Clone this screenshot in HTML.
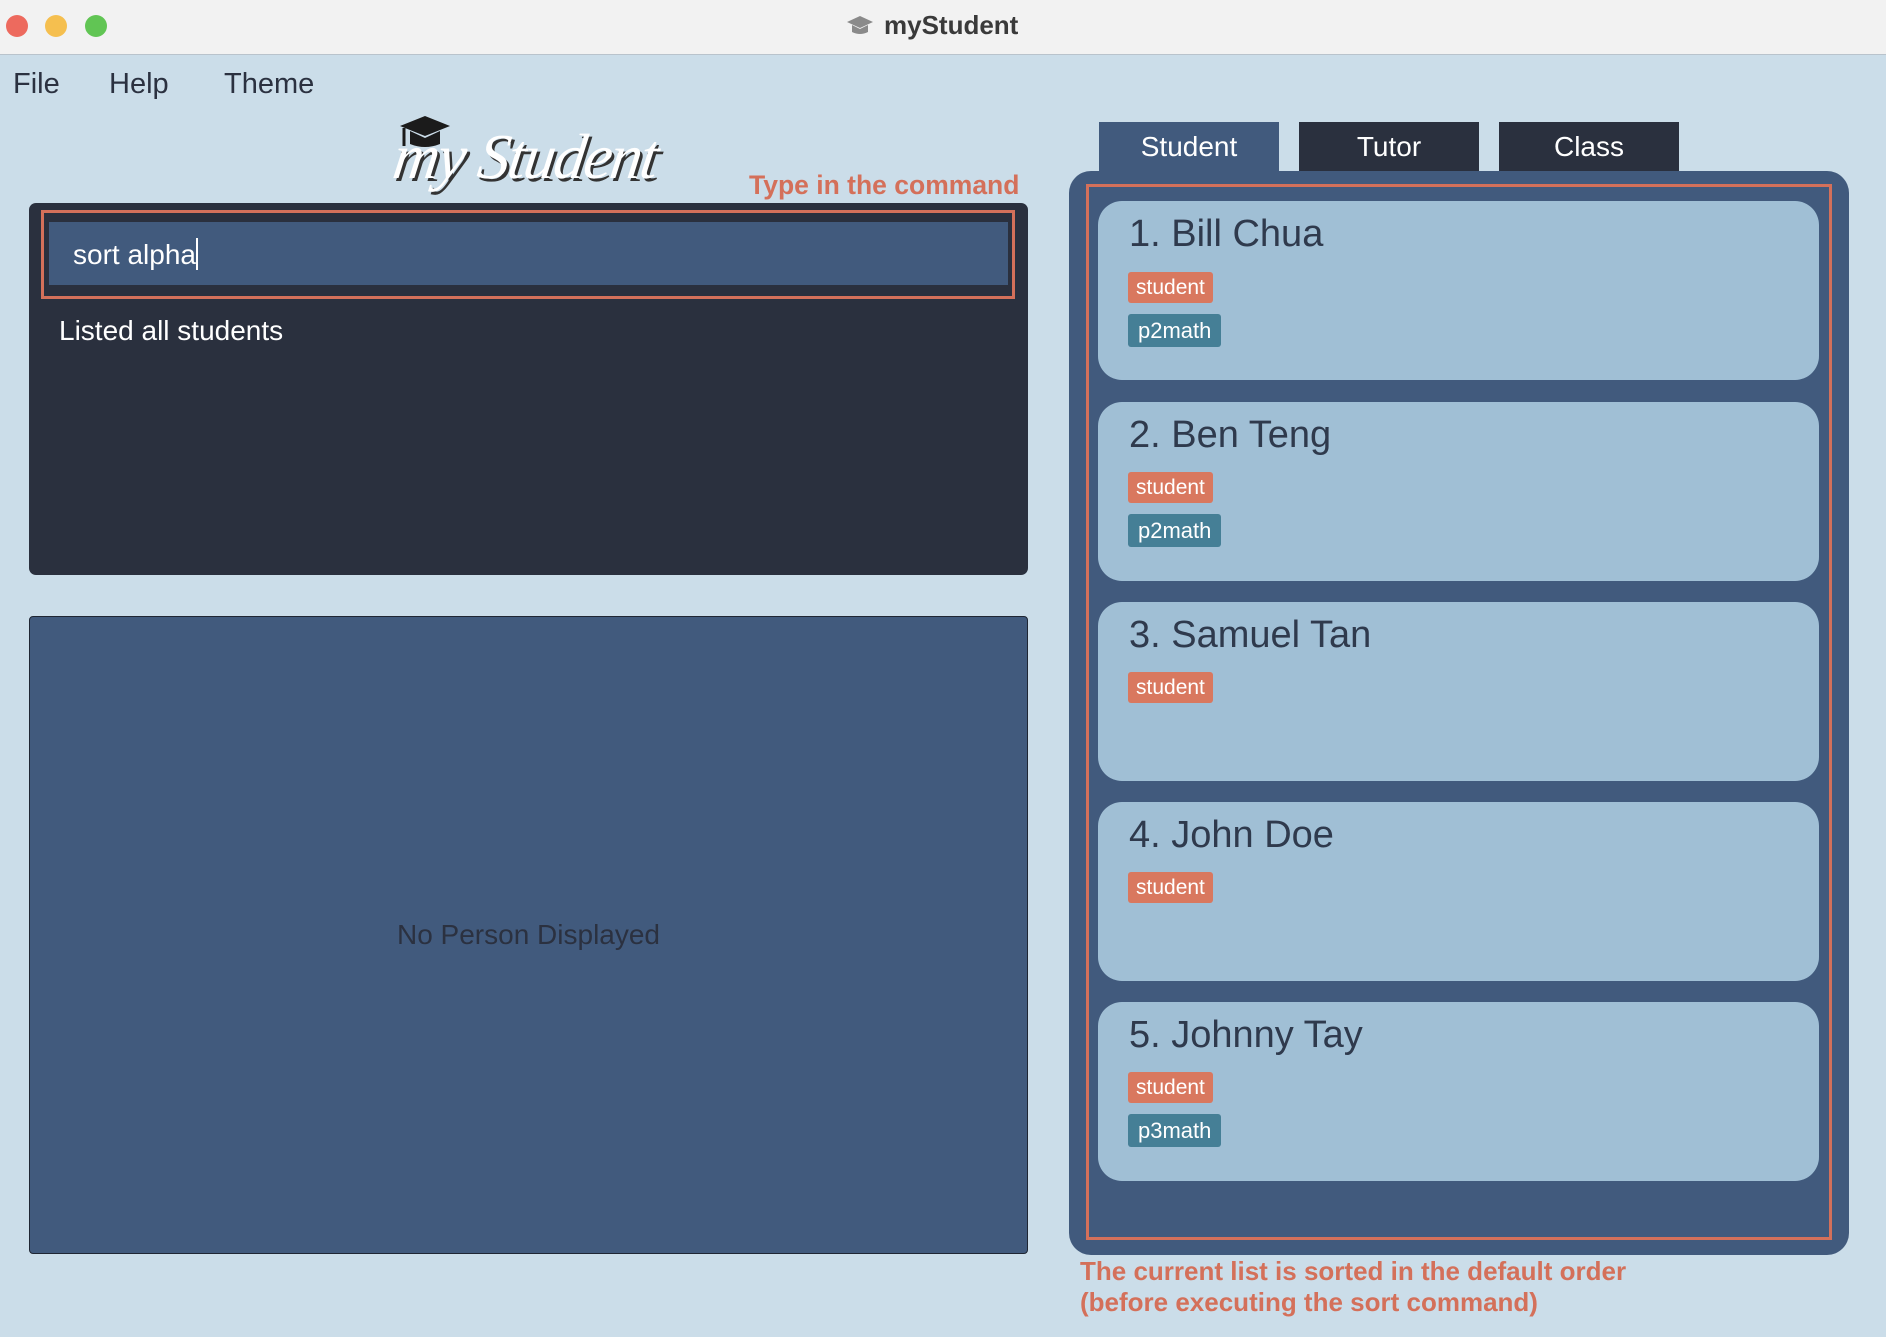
<!DOCTYPE html>
<html><head><meta charset="utf-8"><style>
*{margin:0;padding:0;box-sizing:border-box}
body{width:1886px;height:1337px;background:#cbdde9;font-family:"Liberation Sans",sans-serif;position:relative;overflow:hidden}
.abs{position:absolute}
.title{left:0;top:0;width:1886px;height:55px;background:#f2f2f2;border-bottom:1px solid #b9c3cc}
.dot{width:22px;height:22px;border-radius:50%;top:15px}
.menu{top:68px;font-size:29px;color:#2b3140}
.orange{color:#d4705a;font-weight:bold}
.card{left:1098px;width:721px;height:179px;background:#a0bfd5;border-radius:24px}
.card .n{position:absolute;left:31px;top:12px;font-size:38px;color:#2f3a4d}
.tag{position:absolute;left:30px;height:31px;border-radius:3px;color:#fff;font-size:21px;line-height:31px;padding:0 8px}
.st{background:#d9785f}
.tl{background:#457f96;height:33px;line-height:33px;font-size:22px;padding:0 10px}
.tab{top:122px;height:49px;color:#fff;font-size:28px;text-align:center;line-height:50px}
</style></head><body>
<div class="abs title"></div>
<div class="abs dot" style="left:6px;background:#ed6a5e"></div>
<div class="abs dot" style="left:45px;background:#f5bf4f"></div>
<div class="abs dot" style="left:85px;background:#61c554"></div>
<svg class="abs" style="left:846px;top:14px" width="28" height="22" viewBox="0 0 28 22"><path d="M14 2 L27 8 L14 14 L1 8Z" fill="#8a8a8a"/><path d="M6 11 V18 Q14 22 22 18 V11 L14 15Z" fill="#8a8a8a"/></svg>
<div class="abs" style="left:884px;top:10px;font-size:26px;font-weight:bold;color:#3a3a3a">myStudent</div>
<div class="abs menu" style="left:13px">File</div>
<div class="abs menu" style="left:109px">Help</div>
<div class="abs menu" style="left:224px">Theme</div>
<svg class="abs" style="left:398px;top:114px" width="54" height="40" viewBox="0 0 54 40"><path d="M27 2 L52 12 L27 22 L2 12Z" fill="#1b1b1b"/><path d="M12 17 V30 Q27 36 42 30 V17 L27 24Z" fill="#1b1b1b"/><path d="M6 14 V32" stroke="#1b1b1b" stroke-width="3"/></svg>
<div class="abs" style="left:394px;top:120px;font-family:'Liberation Serif',serif;font-style:italic;font-size:64px;color:#fff;text-shadow:3px 3px 0 #333;letter-spacing:-2px;transform:skewX(-8deg)">my Student</div>
<div class="abs orange" style="left:749px;top:170px;font-size:26.5px">Type in the command</div>
<div class="abs" style="left:29px;top:203px;width:999px;height:372px;background:#2a303e;border-radius:7px"></div>
<div class="abs" style="left:41px;top:210px;width:974px;height:89px;border:3px solid #d4705a"></div>
<div class="abs" style="left:49px;top:222px;width:959px;height:63px;background:#415a7d"></div>
<div class="abs" style="left:73px;top:238px;font-size:28px;color:#fff">sort alpha<span style="display:inline-block;width:2px;height:32px;background:#fff;vertical-align:-6px"></span></div>
<div class="abs" style="left:59px;top:315px;font-size:28px;color:#fff">Listed all students</div>
<div class="abs" style="left:29px;top:616px;width:999px;height:638px;background:#415a7d;border:1.5px solid #1f2633;border-radius:4px"></div>
<div class="abs" style="left:29px;top:919px;width:999px;text-align:center;font-size:28px;color:#2b3140">No Person Displayed</div>
<div class="abs tab" style="left:1099px;width:180px;background:#415a7d;height:60px">Student</div>
<div class="abs tab" style="left:1299px;width:180px;background:#2a303e">Tutor</div>
<div class="abs tab" style="left:1499px;width:180px;background:#2a303e">Class</div>
<div class="abs" style="left:1069px;top:171px;width:780px;height:1084px;background:#415a7d;border-radius:22px"></div>
<div class="abs" style="left:1086px;top:184px;width:746px;height:1056px;border:3px solid #d4705a"></div>
<div class="abs card" style="top:201px"><div class="n">1. Bill Chua</div><div class="tag st" style="top:71px">student</div><div class="tag tl" style="top:113px">p2math</div></div>
<div class="abs card" style="top:402px"><div class="n">2. Ben Teng</div><div class="tag st" style="top:70px">student</div><div class="tag tl" style="top:112px">p2math</div></div>
<div class="abs card" style="top:602px"><div class="n">3. Samuel Tan</div><div class="tag st" style="top:70px">student</div></div>
<div class="abs card" style="top:802px"><div class="n">4. John Doe</div><div class="tag st" style="top:70px">student</div></div>
<div class="abs card" style="top:1002px"><div class="n">5. Johnny Tay</div><div class="tag st" style="top:70px">student</div><div class="tag tl" style="top:112px">p3math</div></div>
<div class="abs orange" style="left:1080px;top:1256px;font-size:26px;line-height:31px">The current list is sorted in the default order<br>(before executing the sort command)</div>
</body></html>
